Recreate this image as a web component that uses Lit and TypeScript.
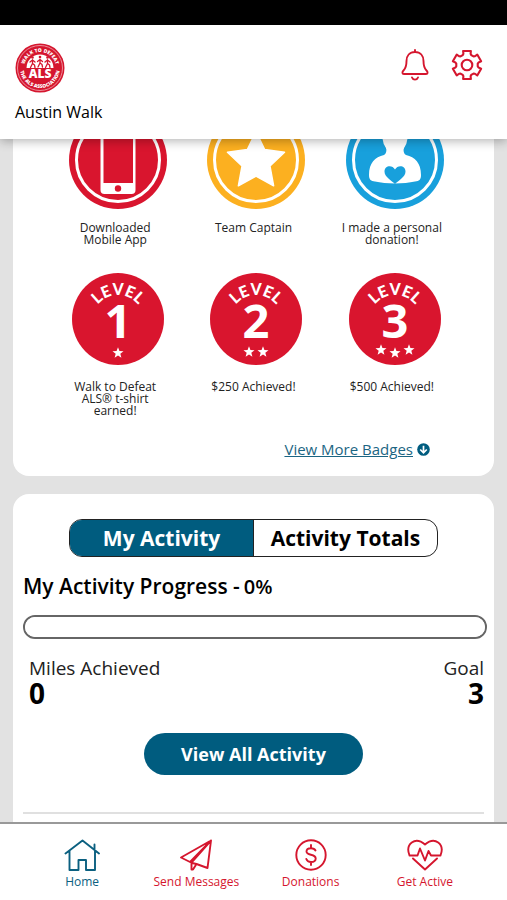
import { LitElement, html, css, svg } from "lit";
import { customElement, property, state } from "lit/decorators.js";
import { classMap } from "lit/directives/class-map.js";

const starPoints = (cx: number, cy: number, r: number, inner = 0.42) =>
  Array.from({ length: 10 }, (_, i) => {
    const rad = i % 2 ? r * inner : r;
    const a = (Math.PI / 5) * i - Math.PI / 2;
    return `${(cx + rad * Math.cos(a)).toFixed(2)},${(cy + rad * Math.sin(a)).toFixed(2)}`;
  }).join(" ");

const walker = (x: number, y: number, s: number) => svg`
  <g transform="translate(${x} ${y}) scale(${s})" fill="none" stroke="#d5162e" stroke-width="2.600" stroke-linecap="round" stroke-linejoin="round">
    <circle cx="0" cy="-9" r="2.600" fill="#d5162e" stroke="none"></circle>
    <path d="M0 -4 L0 3 M0 3 L-4 11 M0 3 L4 6 L5 11 M0 -4 L-5 0 M0 -4 L5 0"></path>
  </g>`;

interface Badge {
  kind: "phone" | "captain" | "donor" | "level";
  label: string;
  level?: number;
}

@customElement("badge-tile")
export class BadgeTile extends LitElement {
  @property({ attribute: false }) badge!: Badge;

  static styles = css`
    :host {
      display: flex;
      flex-direction: column;
      align-items: center;
    }
    svg {
      display: block;
      width: 98px;
      height: 98px;
      padding-left: 6px;
    }
    .caption {
      margin: 13px 0 0;
      width: 108px;
      font-size: 12px;
      line-height: 12px;
      text-align: center;
      color: #222;
    }
    .level {
      font: 900 16px Lato, sans-serif;
    }
    .number {
      font: 700 47px "Noto Sans", sans-serif;
    }
  `;

  private ringed(color: string, art: unknown) {
    return svg`
      <circle cx="49" cy="49" r="49" fill=${color}></circle>
      <circle cx="49" cy="49" r="41.500" fill="none" stroke="#fff" stroke-width="3"></circle>
      ${art}`;
  }

  private art() {
    const { kind, level = 1 } = this.badge;
    if (kind === "phone") {
      return this.ringed("#d9152e", svg`
        <rect x="31.500" y="13" width="35" height="70" rx="4" fill="#fff"></rect>
        <rect x="34.500" y="20" width="29.500" height="52" fill="#d9152e"></rect>
        <circle cx="49" cy="77.500" r="3.200" fill="#d9152e"></circle>`);
    }
    if (kind === "captain") {
      return this.ringed("#fcb020", svg`
        <polygon points=${starPoints(49, 50.5, 30, 0.49)} fill="#fff" stroke="#fff" stroke-width="1.500" stroke-linejoin="round"></polygon>`);
    }
    if (kind === "donor") {
      return this.ringed("#18a0dc", svg`
        <ellipse cx="49" cy="26" rx="12.500" ry="16" fill="#fff"></ellipse>
        <path d="M39 34 C41 38 41 42 38 44 C29 46 23 52 23 64 C23 69 25 70 29 70.500 C40 73 58 73 69 70.500 C73 70 75 69 75 64 C75 52 69 46 60 44 C57 42 57 38 59 34 Z" fill="#fff"></path>
        <path d="M49 73 C45 69 38.500 66 38.500 60.500 C38.500 54 46.500 53.500 49 58.500 C51.500 53.500 59.500 54 59.500 60.500 C59.500 66 53 69 49 73 Z" fill="#18a0dc"></path>`);
    }
    const stars =
      level === 1 ? [[49, 83]] : level === 2 ? [[42, 82], [56, 82]] : [[35, 80], [49, 83], [63, 80]];
    return svg`
      <circle cx="49" cy="49" r="46" fill="#d9152e"></circle>
      <path id="arc" d="M23 51 A26 26 0 0 1 75 51" fill="none"></path>
      <text class="level" fill="#fff" text-anchor="middle"><textPath href="#arc" startOffset="50%">LEVEL</textPath></text>
      <text class="number" x="49" y="68" fill="#fff" text-anchor="middle">${level}</text>
      ${stars.map(([x, y]) => svg`<polygon points=${starPoints(x, y, 5.8)} fill="#fff"></polygon>`)}`;
  }

  render() {
    return html`
      <svg viewBox="0 0 98 98" aria-hidden="true">${this.art()}</svg>
      <p class="caption">${this.badge.label}</p>
    `;
  }
}

@customElement("app-root")
export class AppRoot extends LitElement {
  @state() private tab = 0;
  @state() private page = "Home";

  static styles = css`
    :host {
      display: flex;
      flex-direction: column;
      height: 100vh;
      overflow: hidden;
      background: #e2e2e2;
      color: #000;
      font-family: "Open Sans", "Noto Sans", sans-serif;
    }
    * {
      box-sizing: border-box;
    }
    button {
      font: inherit;
      margin: 0;
      padding: 0;
      border: 0;
      background: none;
      cursor: pointer;
    }
    .status {
      flex: none;
      height: 25px;
      background: #000;
    }
    .header {
      flex: none;
      position: relative;
      padding: 18px 24px 16px 15px;
      background: #fff;
      box-shadow: 0 2px 10px rgba(0, 0, 0, 0.3);
    }
    .bar {
      display: flex;
      align-items: center;
      gap: 20px;
    }
    .logo {
      display: block;
      width: 50px;
      height: 50px;
      margin-right: auto;
    }
    .logo-ring {
      font: 800 10px "Open Sans", sans-serif;
    }
    .logo-name {
      font: 800 24px "Open Sans", sans-serif;
    }
    .tool {
      display: block;
      height: 34px;
      margin-bottom: 6px;
      color: #d5162e;
    }
    .tool svg {
      display: block;
      width: 32px;
      height: 34px;
    }
    .event {
      margin: 8px 0 0;
      font-size: 16px;
      line-height: 22px;
      font-weight: 400;
    }
    .main {
      flex: 1;
      min-height: 0;
      overflow: hidden;
      padding: 0 13px;
    }
    .card {
      border-radius: 16px;
      background: #fff;
    }
    .badges {
      margin-top: -48px;
      padding: 20px 33px 17px;
    }
    .grid {
      display: grid;
      grid-template-columns: repeat(3, 1fr);
      row-gap: 24px;
    }
    .more {
      display: flex;
      justify-content: flex-end;
      align-items: center;
      gap: 4px;
      margin: 22px 31px 0 0;
      font-size: 15px;
      line-height: 20px;
    }
    .more a {
      color: #1b6583;
    }
    .more svg {
      width: 13px;
      height: 13px;
    }
    .activity {
      margin-top: 18px;
      padding: 25px 10px 40px;
    }
    .tabs {
      display: flex;
      width: 80%;
      height: 38px;
      margin: 0 auto;
      border: 1px solid #222;
      border-radius: 13px;
      overflow: hidden;
    }
    .tab {
      flex: 1;
      font-size: 21px;
      line-height: 36px;
      font-weight: 700;
      color: #000;
    }
    .tab + .tab {
      border-left: 1px solid #222;
    }
    .tab.on {
      background: #005c7f;
      color: #fff;
    }
    .title {
      display: flex;
      align-items: center;
      gap: 4px;
      margin: 14px 0 0;
      font-size: 21px;
      line-height: 30px;
      font-weight: 600;
    }
    .percent {
      padding-top: 2px;
      font-size: 20px;
      line-height: 28px;
    }
    .meter {
      display: block;
      appearance: none;
      width: calc(100% + 3px);
      height: 24px;
      margin-top: 14px;
      border: 2px solid #666;
      border-radius: 12px;
      background: #fff;
      overflow: hidden;
    }
    .meter::-webkit-progress-bar {
      background: #fff;
    }
    .meter::-webkit-progress-value {
      background: #005c7f;
    }
    .stats {
      display: flex;
      justify-content: space-between;
      margin: 16px 0 0;
      padding: 0 0 0 6px;
    }
    .stat {
      display: flex;
      flex-direction: column;
    }
    .stat:last-child {
      align-items: flex-end;
    }
    dt {
      font-size: 19px;
      line-height: 26px;
      color: #222;
    }
    dd {
      margin: 0;
      font-size: 28px;
      line-height: 24px;
      font-weight: 700;
    }
    .all {
      display: block;
      margin: 28px auto 0;
      padding: 0 37px;
      border-radius: 21px;
      background: #005c7f;
      color: #fff;
      font-size: 18px;
      line-height: 42px;
      font-weight: 700;
    }
    hr {
      height: 2px;
      margin: 37px 0 0;
      border: 0;
      background: #e0e0e0;
    }
    .nav {
      flex: none;
      display: grid;
      grid-template-columns: repeat(4, 1fr);
      padding: 14px 25px 10px;
      border-top: 2px solid #999;
      background: #fff;
    }
    .nav a {
      display: flex;
      flex-direction: column;
      align-items: center;
      color: #d5162e;
      font-size: 12px;
      line-height: 16px;
      white-space: nowrap;
      text-decoration: none;
    }
    .nav a.on {
      color: #0b6080;
    }
    .nav svg {
      width: 36px;
      height: 36px;
    }
  `;

  private badges: Badge[] = [
    { kind: "phone", label: "Downloaded Mobile App" },
    { kind: "captain", label: "Team Captain" },
    { kind: "donor", label: "I made a personal donation!" },
    { kind: "level", level: 1, label: "Walk to Defeat ALS® t-shirt earned!" },
    { kind: "level", level: 2, label: "$250 Achieved!" },
    { kind: "level", level: 3, label: "$500 Achieved!" },
  ];

  private nav = [
    {
      name: "Home",
      icon: svg`<path d="M1.500 15.500 L18.500 2.500 L35 15.500 M5.500 13 V32 H14.500 V22 H22 V32 H31 V13 M30.500 12 V6.500"></path>`,
    },
    {
      name: "Send Messages",
      icon: svg`<path d="M33 2.500 L3 19.500 L12 24 Z M33 2.500 L29.500 30 L18.500 26 M33 2.500 L13.500 24.500 V31.500 H15 L18.500 26 M14 25 L18.500 26"></path>`,
    },
    {
      name: "Donations",
      icon: svg`<circle cx="18" cy="17" r="14.700"></circle><path d="M22.500 12.500 C21.500 10.500 20 10.200 18 10.200 C15 10.200 13.500 11.800 13.500 13.500 C13.500 18 22.700 15.500 22.700 20.500 C22.700 22.600 20.800 24 18 24 C15.500 24 14 23 13.300 21 M18 7 V10 M18 24 V27"></path>`,
    },
    {
      name: "Get Active",
      icon: svg`<path d="M2.500 17.500 C-2 6 8 -2 18 6.500 C28 -2 38 6 33.500 17.500 M6 20.500 L18 31.500 L30 20.500 M2.500 17.500 H10.500 L13 10.500 L18 22.500 L21.500 13 L24 17.500 H33.500"></path>`,
    },
  ];

  private logo() {
    return html`<svg class="logo" viewBox="0 0 100 100" role="img" aria-label="Walk to Defeat ALS">
      <circle cx="50" cy="50" r="49" fill="#d5162e"></circle>
      <circle cx="50" cy="50" r="45" fill="none" stroke="#f3b5bd" stroke-width="1.500"></circle>
      <path d="M23 50 A27 27 0 0 1 77 50 Z" fill="#fff"></path>
      ${walker(35, 38, 1)}${walker(50, 37, 1)}${walker(65, 38, 1)}
      <path id="logo-top" d="M18 50 A32 32 0 0 1 82 50" fill="none"></path>
      <path id="logo-bottom" d="M10 50 A40 40 0 0 0 90 50" fill="none"></path>
      <text class="logo-ring" fill="#fff" text-anchor="middle"><textPath href="#logo-top" startOffset="50%">WALK TO DEFEAT</textPath></text>
      <text class="logo-ring" fill="#fff" text-anchor="middle"><textPath href="#logo-bottom" startOffset="50%">THE ALS ASSOCIATION</textPath></text>
      <text class="logo-name" x="50" y="70" fill="#fff" text-anchor="middle">ALS</text>
    </svg>`;
  }

  private gearPath() {
    const pts: string[] = [];
    for (let i = 0; i < 6; i++) {
      const a = (i * 60 - 90) * (Math.PI / 180);
      for (const [r, d] of [[10.8, -0.4], [11.8, -0.31], [14.6, -0.27], [14.6, 0.27], [11.8, 0.31], [10.8, 0.4]]) {
        pts.push(`${(16 + r * Math.cos(a + d)).toFixed(2)} ${(17 + r * Math.sin(a + d)).toFixed(2)}`);
      }
    }
    return `M${pts.join(" L")} Z`;
  }

  render() {
    return html`
      <div class="status"></div>
      <header class="header">
        <div class="bar">
          ${this.logo()}
          <button class="tool" aria-label="Notifications">
            <svg viewBox="0 0 32 34" fill="none" stroke="currentColor" stroke-width="1.900" stroke-linecap="round" stroke-linejoin="round">
              <path d="M16 2 V4 M16 4 C10.500 4 7.500 8 7.500 13 C7.500 19 6.500 20.500 4.500 22.500 C3 24 3 26 5 26 H27 C29 26 29 24 27.500 22.500 C25.500 20.500 24.500 19 24.500 13 C24.500 8 21.500 4 16 4 Z M13 29.500 C14 32.300 18 32.300 19 29.500"></path>
            </svg>
          </button>
          <button class="tool" aria-label="Settings">
            <svg viewBox="0 0 32 34" fill="none" stroke="currentColor" stroke-width="2.100" stroke-linejoin="round">
              <path d=${this.gearPath()}></path>
              <circle cx="16" cy="17" r="5.300"></circle>
            </svg>
          </button>
        </div>
        <h1 class="event">Austin Walk</h1>
      </header>
      <main class="main">
        <section class="card badges">
          <div class="grid">
            ${this.badges.map((b) => html`<badge-tile .badge=${b}></badge-tile>`)}
          </div>
          <div class="more">
            <a href="#badges">View More Badges</a>
            <svg viewBox="0 0 13 13" aria-hidden="true">
              <circle cx="6.500" cy="6.500" r="6.300" fill="#005c7f"></circle>
              <path d="M6.500 2.800 V9.500 M3.200 6.500 L6.500 9.800 L9.800 6.500" fill="none" stroke="#fff" stroke-width="1.700"></path>
            </svg>
          </div>
        </section>
        <section class="card activity">
          <div class="tabs" role="tablist">
            ${["My Activity", "Activity Totals"].map(
              (name, i) => html`<button
                class=${classMap({ tab: true, on: this.tab === i })}
                role="tab"
                aria-selected=${this.tab === i}
                @click=${() => (this.tab = i)}
              >${name}</button>`
            )}
          </div>
          <h2 class="title"><label for="progress">My Activity Progress -</label><span class="percent">0%</span></h2>
          <progress class="meter" id="progress" value="0" max="3"></progress>
          <dl class="stats">
            <div class="stat"><dt>Miles Achieved</dt><dd>0</dd></div>
            <div class="stat"><dt>Goal</dt><dd>3</dd></div>
          </dl>
          <button class="all">View All Activity</button>
          <hr />
        </section>
      </main>
      <nav class="nav">
        ${this.nav.map(
          (n) => html`<a
            href="#"
            class=${classMap({ on: this.page === n.name })}
            @click=${() => (this.page = n.name)}
          >
            <svg viewBox="0 0 36 36" fill="none" stroke="currentColor" stroke-width="1.900" stroke-linejoin="round" stroke-linecap="round" aria-hidden="true">${n.icon}</svg>
            ${n.name}
          </a>`
        )}
      </nav>
    `;
  }
}
